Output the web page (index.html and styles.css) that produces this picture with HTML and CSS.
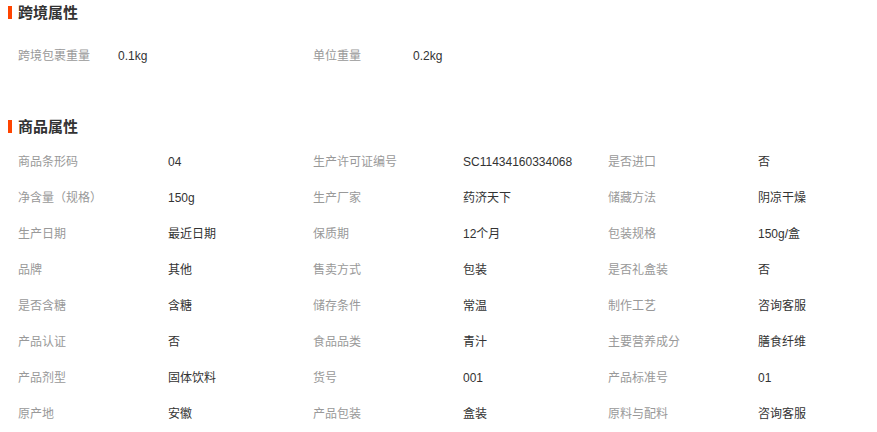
FILE: index.html
```html
<!DOCTYPE html>
<html lang="zh-CN">
<head>
    <meta charset="UTF-8">
    <meta name="viewport" content="width=device-width, initial-scale=1.0">
    <title>商品属性</title>
    <link rel="stylesheet" href="styles.css">
</head>
<body>
    <div class="section">
        <h3 class="title">跨境属性</h3>
        <div class="attrs cross">
            <span class="label">跨境包裹重量</span><span class="value">0.1kg</span>
            <span class="label">单位重量</span><span class="value">0.2kg</span>
        </div>
    </div>

    <div class="section goods">
        <h3 class="title">商品属性</h3>
        <div class="attrs">
            <span class="label">商品条形码</span><span class="value">04</span>
            <span class="label">生产许可证编号</span><span class="value">SC11434160334068</span>
            <span class="label">是否进口</span><span class="value">否</span>

            <span class="label">净含量（规格）</span><span class="value">150g</span>
            <span class="label">生产厂家</span><span class="value">药济天下</span>
            <span class="label">储藏方法</span><span class="value">阴凉干燥</span>

            <span class="label">生产日期</span><span class="value">最近日期</span>
            <span class="label">保质期</span><span class="value">12个月</span>
            <span class="label">包装规格</span><span class="value">150g/盒</span>

            <span class="label">品牌</span><span class="value">其他</span>
            <span class="label">售卖方式</span><span class="value">包装</span>
            <span class="label">是否礼盒装</span><span class="value">否</span>

            <span class="label">是否含糖</span><span class="value">含糖</span>
            <span class="label">储存条件</span><span class="value">常温</span>
            <span class="label">制作工艺</span><span class="value">咨询客服</span>

            <span class="label">产品认证</span><span class="value">否</span>
            <span class="label">食品品类</span><span class="value">青汁</span>
            <span class="label">主要营养成分</span><span class="value">膳食纤维</span>

            <span class="label">产品剂型</span><span class="value">固体饮料</span>
            <span class="label">货号</span><span class="value">001</span>
            <span class="label">产品标准号</span><span class="value">01</span>

            <span class="label">原产地</span><span class="value">安徽</span>
            <span class="label">产品包装</span><span class="value">盒装</span>
            <span class="label">原料与配料</span><span class="value">咨询客服</span>
        </div>
    </div>
</body>
</html>
```

FILE: styles.css
```css
body {
    margin: 0;
    background: #fff;
    font-family: "Liberation Sans", Arial, "Noto Sans CJK SC", sans-serif;
    font-size: 12px;
    color: #333;
}
.section {
    padding-top: 6px;
}
.goods {
    padding-top: 46px;
}
.title {
    margin: 0 0 0 8px;
    padding-left: 6px;
    border-left: 4px solid #ff4400;
    height: 13px;
    line-height: 13px;
    font-size: 15px;
    font-weight: bold;
    color: #333;
}
.attrs {
    display: grid;
    grid-template-columns: 150px 145px 150px 145px 150px auto;
    grid-auto-rows: 36px;
    line-height: 36px;
    padding-left: 18px;
    margin-top: 11px;
}
.cross {
    grid-template-columns: 100px 195px 100px auto;
    margin-top: 19px;
}
.label {
    color: #999;
}
.value {
    color: #333;
}
```
